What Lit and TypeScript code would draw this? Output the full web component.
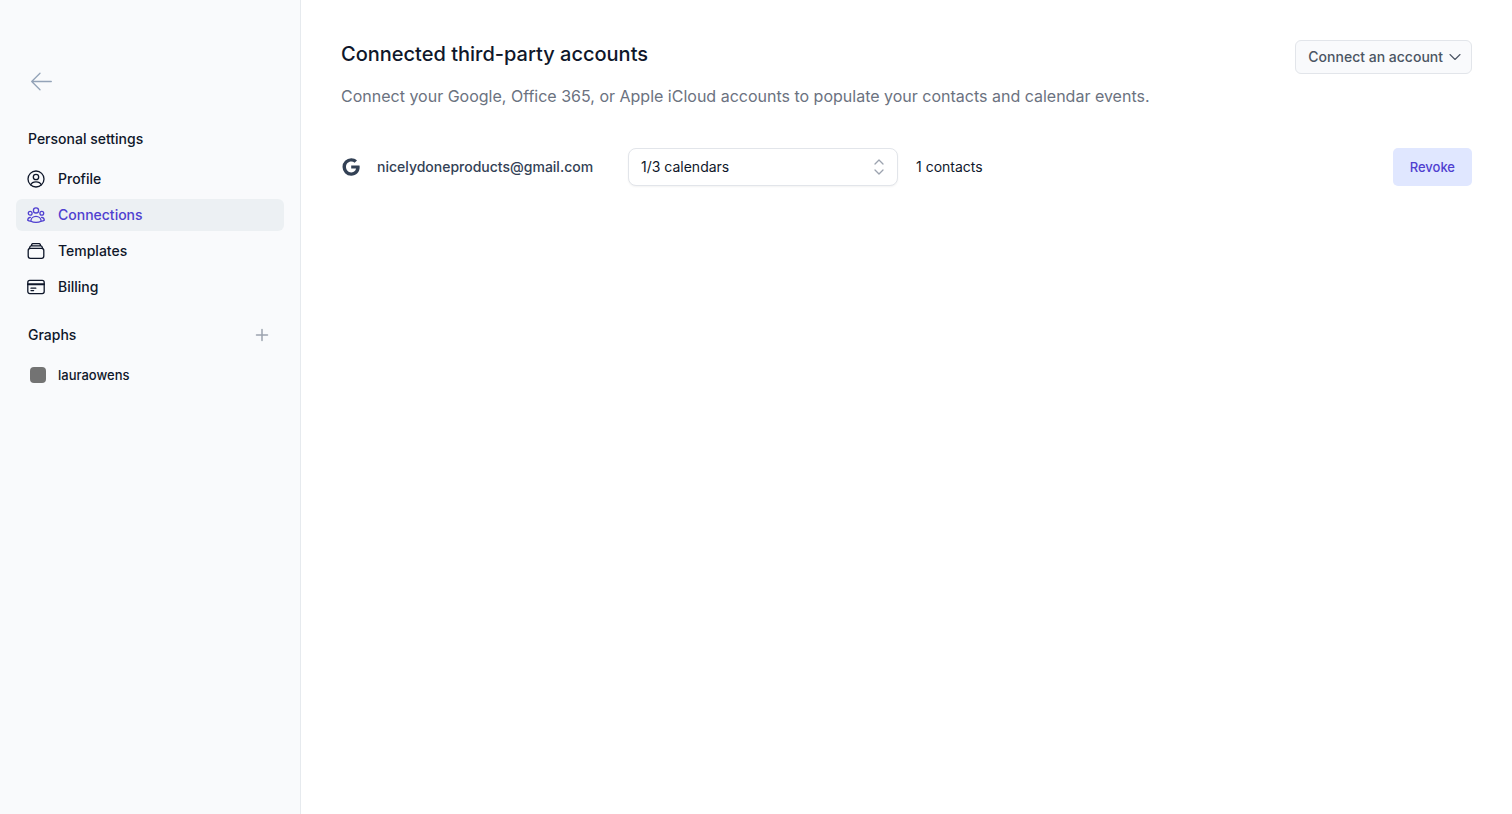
import { LitElement, html, css, svg } from "lit";
import { customElement } from "lit/decorators.js";
import { classMap } from "lit/directives/class-map.js";

const profileIcon = svg`
  <circle cx="10" cy="10" r="8"/>
  <circle cx="10" cy="8" r="2.7"/>
  <path d="M4.7 15.800c.8-2 2.800-3 5.300-3s4.500 1 5.300 3"/>`;

const connectionsIcon = svg`
  <circle cx="10" cy="5.400" r="2.600"/>
  <circle cx="4.200" cy="8.200" r="1.900"/>
  <circle cx="15.800" cy="8.200" r="1.900"/>
  <path d="M4.900 16.200c0-2.700 2.200-4.800 5.100-4.800s5.100 2.100 5.100 4.800c-1.400.8-3.100 1.200-5.100 1.200s-3.700-.4-5.100-1.200Z"/>
  <path d="M4.400 12.300c-1.700.2-2.700 1.300-2.700 2.900.7.500 1.600.8 2.700.9M15.600 12.300c1.700.2 2.700 1.300 2.700 2.900-.7.500-1.600.8-2.700.9"/>`;

const templatesIcon = svg`
  <rect x="2.200" y="7.300" width="15.600" height="10" rx="2.200"/>
  <path d="M3.300 7.400l.8-1.900c.2-.4.500-.6 1-.6h9.800c.5 0 .8.200 1 .6l.8 1.900M5.400 4.800l.5-1.500c.1-.4.400-.6.800-.6h6.600c.4 0 .7.200.8.600l.5 1.500"/>`;

const billingIcon = svg`
  <rect x="1.800" y="3.400" width="16.400" height="13.200" rx="2"/>
  <path d="M2 7.200h16" stroke-width="2"/>
  <path d="M5 11.200h4.800M5 13.600h2.600"/>`;

const navItems = [
  { label: "Profile", icon: profileIcon, active: false },
  { label: "Connections", icon: connectionsIcon, active: true },
  { label: "Templates", icon: templatesIcon, active: false },
  { label: "Billing", icon: billingIcon, active: false },
];

@customElement("settings-sidebar")
class SettingsSidebar extends LitElement {
  static styles = css`
    :host {
      display: block;
      box-sizing: border-box;
      padding: 68px 16px 24px;
      background: #f9fafc;
      border-right: 1px solid #e6eaee;
      color: #0f172a;
      font-size: 14px;
      font-weight: 500;
      line-height: 20px;
    }
    svg {
      display: block;
      fill: none;
      stroke: currentColor;
      stroke-linecap: round;
      stroke-linejoin: round;
    }
    a {
      color: inherit;
      text-decoration: none;
    }
    .back {
      display: block;
      width: fit-content;
      margin-left: 12px;
      color: #94a3b8;
    }
    .heading {
      display: flex;
      align-items: center;
      justify-content: space-between;
      height: 24px;
      margin: 20px 12px 12px;
    }
    .heading.first {
      margin-top: 33px;
    }
    h2 {
      margin: 0;
      font: inherit;
    }
    .add {
      padding: 0;
      border: 0;
      background: none;
      color: #9ca3af;
    }
    ul {
      display: grid;
      gap: 4px;
      margin: 0;
      padding: 0;
      list-style: none;
    }
    .item {
      display: flex;
      align-items: center;
      gap: 12px;
      height: 32px;
      padding: 0 10px;
      border-radius: 6px;
    }
    .item.active {
      background: #ecf0f3;
      color: #4f3fd0;
    }
    .item.graph {
      font-size: 13px;
    }
    .swatch {
      width: 16px;
      height: 16px;
      margin-left: 4px;
      border-radius: 4px;
      background: #737373;
    }
  `;

  render() {
    return html`
      <a class="back" href="#" aria-label="Back">
        <svg width="28" height="26" viewBox="0 0 28 26" stroke-width="1.3">
          <path d="M23.300 13.500H3.700M12 5.300L3.700 13.500l8.300 8.200" />
        </svg>
      </a>
      <div class="heading first"><h2>Personal settings</h2></div>
      <nav aria-label="Personal settings">
        <ul>
          ${navItems.map(
            (item) => html`<li>
              <a class=${classMap({ item: true, active: item.active })} href="#">
                <svg width="20" height="20" viewBox="0 0 20 20" stroke-width="1.3">${item.icon}</svg>
                ${item.label}
              </a>
            </li>`
          )}
        </ul>
      </nav>
      <div class="heading">
        <h2>Graphs</h2>
        <button class="add" aria-label="Add graph">
          <svg width="20" height="20" viewBox="0 0 20 20" stroke-width="1.5">
            <path d="M10 4.500v11M4.500 10h11" />
          </svg>
        </button>
      </div>
      <ul>
        <li><a class="item graph" href="#"><span class="swatch"></span>lauraowens</a></li>
      </ul>
    `;
  }
}

@customElement("connected-accounts")
class ConnectedAccounts extends LitElement {
  static styles = css`
    :host {
      display: block;
      padding: 40px;
      color: #0f172a;
      font-size: 14px;
      line-height: 20px;
    }
    header {
      display: flex;
      align-items: flex-start;
      justify-content: space-between;
      gap: 24px;
    }
    h1 {
      margin: 0;
      font-size: 20px;
      font-weight: 500;
      line-height: 28px;
    }
    .intro {
      margin: 16px 0 0;
      color: #6b7280;
      font-size: 16px;
      line-height: 24px;
    }
    button,
    select {
      font: inherit;
      box-sizing: border-box;
    }
    svg {
      display: block;
      fill: none;
      stroke: currentColor;
      stroke-linecap: round;
      stroke-linejoin: round;
    }
    .connect {
      display: flex;
      flex: none;
      align-items: center;
      gap: 4px;
      height: 34px;
      padding: 0 8px 0 12px;
      border: 1px solid #e2e5ea;
      border-radius: 6px;
      background: #f9fafc;
      color: #4b5563;
      font-weight: 500;
    }
    .account {
      display: grid;
      grid-template-columns: 269px 270px 1fr auto;
      align-items: center;
      gap: 18px;
      margin-top: 40px;
    }
    .owner {
      display: flex;
      align-items: center;
      gap: 16px;
      color: #334155;
      font-weight: 500;
    }
    .logo {
      fill: currentColor;
      stroke: none;
    }
    .picker {
      display: grid;
      align-items: center;
    }
    .picker > * {
      grid-area: 1 / 1;
    }
    .picker svg {
      justify-self: end;
      margin-right: 11px;
      color: #9ca3af;
      pointer-events: none;
    }
    select {
      appearance: none;
      width: 100%;
      height: 38px;
      padding: 0 36px 0 12px;
      border: 1px solid #e2e5ea;
      border-radius: 8px;
      background: #fff;
      color: #0f172a;
      box-shadow: 0 1px 2px rgb(0 0 0 / 5%);
    }
    .revoke {
      height: 38px;
      padding: 0 17px;
      border: 0;
      border-radius: 5px;
      background: #e0e7ff;
      color: #4f3fd0;
      font-size: 13px;
      font-weight: 500;
    }
  `;

  render() {
    return html`
      <header>
        <div>
          <h1>Connected third-party accounts</h1>
          <p class="intro">
            Connect your Google, Office 365, or Apple iCloud accounts to populate your contacts and calendar events.
          </p>
        </div>
        <button class="connect" aria-haspopup="menu">
          Connect an account
          <svg width="16" height="16" viewBox="0 0 16 16" stroke-width="1.1">
            <path d="M3 5.500l5 5 5-5" />
          </svg>
        </button>
      </header>
      <section class="account" aria-label="Google account">
        <div class="owner">
          <svg class="logo" width="20" height="20" viewBox="-1 -1 20 20" role="img" aria-label="Google">
            <path
              d="M9.200 7.400h8.300c.1.600.2 1.100.2 1.700 0 5-3.400 8.600-8.500 8.600A8.700 8.700 0 0 1 .5 9 8.700 8.700 0 0 1 9.200.3c2.300 0 4.300.9 5.800 2.200l-2.400 2.300A4.900 4.900 0 0 0 9.200 3.600C6.300 3.600 4 6 4 9s2.300 5.400 5.200 5.400c3.300 0 4.600-2.200 4.800-3.900H9.200Z"
            />
          </svg>
          <span>nicelydoneproducts@gmail.com</span>
        </div>
        <div class="picker">
          <select aria-label="Calendars">
            <option>1/3 calendars</option>
          </select>
          <svg width="16" height="18" viewBox="0 0 16 18" stroke-width="1.300">
            <path d="M4 6l4-4 4 4M4 12l4 4 4-4" />
          </svg>
        </div>
        <span>1 contacts</span>
        <button class="revoke">Revoke</button>
      </section>
    `;
  }
}

@customElement("app-root")
class AppRoot extends LitElement {
  static styles = css`
    :host {
      display: grid;
      grid-template-columns: 301px 1fr;
      min-height: 100vh;
      background: #fff;
      font-family: Inter, sans-serif;
    }
  `;

  render() {
    return html`
      <settings-sidebar></settings-sidebar>
      <main><connected-accounts></connected-accounts></main>
    `;
  }
}
